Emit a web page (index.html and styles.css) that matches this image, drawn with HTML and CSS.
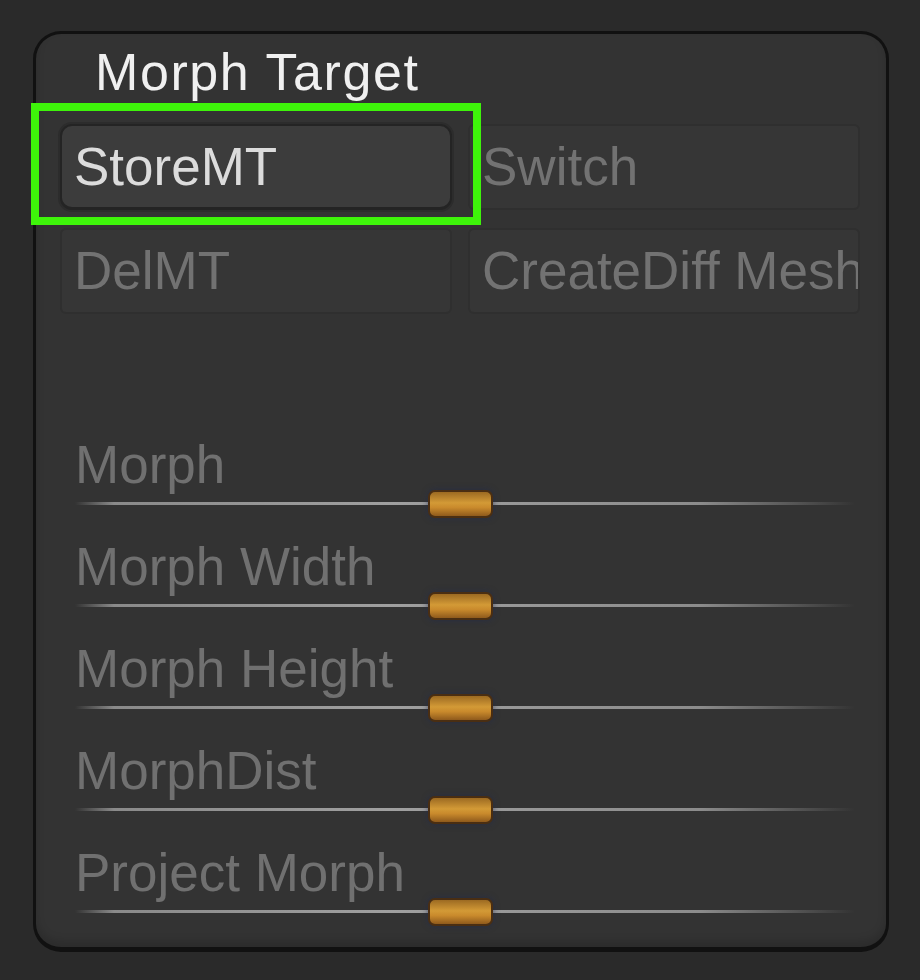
FILE: index.html
```html
<html>
	<head>
		<title>Morph Target</title>
		<link rel="stylesheet" href="styles.css">
	</head>
	<body>
		<div class="panel">
			<div class="highlight"></div>
			<h3 class="title">Morph Target</h3>
			<div class="buttons">
				<div class="btn active">StoreMT</div>
				<div class="btn">Switch</div>
				<div class="btn">DelMT</div>
				<div class="btn">CreateDiff Mesh</div>
			</div>
			<div class="sliders">
				<div class="slider">
					<div class="label">Morph</div>
					<div class="track"><span class="knob"></span></div>
				</div>
				<div class="slider">
					<div class="label">Morph Width</div>
					<div class="track"><span class="knob"></span></div>
				</div>
				<div class="slider">
					<div class="label">Morph Height</div>
					<div class="track"><span class="knob"></span></div>
				</div>
				<div class="slider">
					<div class="label">MorphDist</div>
					<div class="track"><span class="knob"></span></div>
				</div>
				<div class="slider">
					<div class="label">Project Morph</div>
					<div class="track"><span class="knob"></span></div>
				</div>
			</div>
		</div>
	</body>
</html>
```

FILE: styles.css
```css
html {
  height: 100%;
}

body {
  margin: 0;
  padding: 31px 0 0 33px;
  background-color: #2a2a2a;
  font-family: "Liberation Sans", Arial, sans-serif;
}

.panel {
  position: relative;
  box-sizing: border-box;
  width: 856px;
  height: 921px;
  border: 3px solid #111;
  border-bottom-width: 5px;
  border-radius: 28px;
  background-color: #333;
  box-shadow: inset 0 -6px 8px rgba(0,0,0,.15);
}

.highlight {
  position: absolute;
  left: -5px;
  top: 69px;
  width: 434px;
  height: 106px;
  border: 8px solid #3ef40a;
  z-index: 2;
}

.title {
  margin: 8px 0 0 0;
  padding-left: 59px;
  font-size: 52px;
  line-height: 60px;
  font-weight: normal;
  letter-spacing: 1.6px;
  color: #f0f0f0;
}

.buttons {
  display: grid;
  grid-template-columns: 392px 392px;
  grid-auto-rows: 86px;
  column-gap: 16px;
  row-gap: 18px;
  margin-top: 22px;
  padding-left: 24px;
}

.btn {
  box-sizing: border-box;
  overflow: hidden;
  white-space: nowrap;
  padding-left: 12px;
  font-size: 53px;
  line-height: 82px;
  color: #727272;
  background-color: #363636;
  border: 2px solid #2f2f2f;
  border-radius: 6px;
}

.btn.active {
  color: #dcdcdc;
  background-color: #3c3c3c;
  border-color: #242424;
  border-bottom-width: 3px;
  border-radius: 12px;
  box-shadow: 0 0 0 2px #2c2c2c;
}

.sliders {
  margin-top: 121px;
}

.slider {
  height: 102px;
}

.label {
  padding-left: 39px;
  font-size: 53px;
  line-height: 60px;
  color: #707070;
}

.track {
  position: relative;
  height: 16px;
  margin-left: 39px;
  width: 780px;
  background: linear-gradient(to right, rgba(150,150,150,0) 0%, #8a8a8a 5%, #a0a0a0 40%, #8c8c8c 80%, rgba(140,140,140,0) 100%) no-repeat 0 7px / 100% 3px;
}

.knob {
  position: absolute;
  left: 353px;
  top: -5px;
  box-sizing: border-box;
  width: 65px;
  height: 28px;
  border: 2px solid #4a2e12;
  border-radius: 7px;
  background: linear-gradient(#9c6a22, #d39a36 45%, #c98a2c 65%, #8f5a1c);
  box-shadow: 0 0 6px rgba(30,40,80,.6);
}
```
